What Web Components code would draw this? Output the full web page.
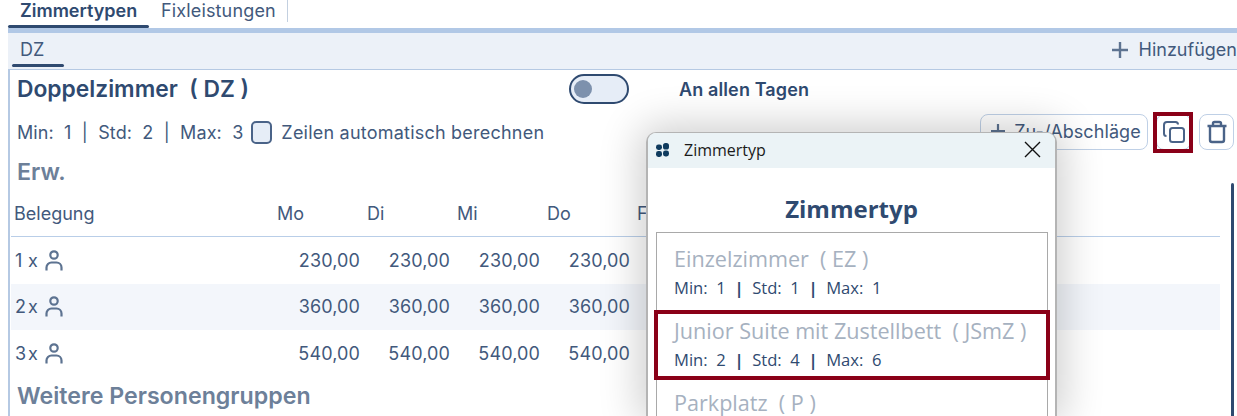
<!DOCTYPE html>
<html lang="de"><head><meta charset="utf-8">
<style>
html,body{margin:0;padding:0;background:#fff}
body{width:1237px;height:416px;overflow:hidden;position:relative;font-family:Inter,"Liberation Sans",sans-serif;color:#2f4a70}
</style></head><body>
<app-tabs></app-tabs>
<sub-bar></sub-bar>
<room-panel></room-panel>
<room-dialog></room-dialog>
<script>
const el=(name,html)=>customElements.define(name,class extends HTMLElement{constructor(){super();this.attachShadow({mode:'open'}).innerHTML=html}});
const person='<svg width="18" height="21" viewBox="0 0 18 21" fill="none" stroke="#5d7391" stroke-width="2.2"><circle cx="9" cy="5" r="3.7"/><path d="M1.5 20.5v-3a5 5 0 0 1 5-5h5a5 5 0 0 1 5 5v3"/></svg>';
el('app-tabs',`<style>
:host{display:flex;height:28px;padding-left:8px;box-sizing:border-box;font-size:18px;align-items:flex-start}
.t{height:28px;box-sizing:border-box;padding:0 12px;line-height:21px;position:relative;white-space:nowrap}
.a{font-weight:600;width:141px}
.a::after{content:"";position:absolute;left:0;right:0;bottom:0;height:3px;border-radius:2px;background:#2f4a70}
.b{color:#42597c;width:139px;height:22px;border-right:1px solid #c3d0e0;letter-spacing:.15px}
</style><div class="t a">Zimmertypen</div><div class="t b">Fixleistungen</div>`);
el('sub-bar',`<style>
:host{display:block;border-top:5px solid #b1c8e6;margin-left:8px;height:36px;background:#ecf1f8;position:relative}
.w{display:flex;justify-content:space-between;height:100%;font-size:18px}
.d{width:52px;margin-left:4px;box-sizing:border-box;padding:6px 8px 0;line-height:22px;height:34px;position:relative;color:#42597c}
.d::after{content:"";position:absolute;left:0;right:0;bottom:0;height:3px;border-radius:2px;background:#2f4a70}
.h{display:flex;align-items:center;gap:10px;height:36px;color:#42597c;padding-bottom:3px;box-sizing:border-box;white-space:nowrap}
</style><div class="w"><div class="d">DZ</div><div class="h"><svg width="18" height="18" viewBox="0 0 18 18" stroke="#5d7391" stroke-width="2.4"><path d="M9 1v16M1 9h16"/></svg><span>Hinzufügen</span></div></div>`);
const row=(n,v,s)=>`<div class="r ${s?'s':''}"><div class="c0"><span class="num">${n}</span><span class="x">x</span>${person}</div>${[v,v,v,v].map(p=>`<div class="c">${p}</div>`).join('')}</div>`;
el('room-panel',`<style>
:host{display:block;margin-left:8px;height:347px;border-top:1px solid #b5c9e3;border-left:2px solid #b5c9e3;box-sizing:border-box;position:relative;overflow:hidden}
.top{display:flex;height:38px;align-items:center;padding-left:7px}
h2{margin:0;font-size:22.8px;font-weight:600;width:552px;white-space:pre;line-height:36px}
.sw{width:60px;height:30px;border:2px solid #2f4a70;border-radius:15px;background:#e6edf7;box-sizing:border-box;display:flex;align-items:center;padding-left:3px;margin-top:-1px}
.sw i{width:18px;height:18px;border-radius:50%;background:#7d91ad}
.all{margin-left:50px;font-weight:600;font-size:18px;letter-spacing:.12px}
.info{display:flex;align-items:center;height:44px;padding-left:7px;font-size:18px;white-space:pre;color:#42597c;margin-top:2px;margin-right:3px;letter-spacing:.09px}
.cb{width:21px;height:23px;border:2px solid #4a6388;border-radius:5px;background:#e6edf7;box-sizing:border-box;margin:0 9px 0 8px}
.ze{letter-spacing:.22px}
.btns{margin-left:auto;display:flex;gap:8px;align-items:center;height:36px}
.btn{height:36px;border:1px solid #bfd0e6;border-radius:8px;box-sizing:border-box;display:flex;align-items:center;justify-content:center;background:#fff;color:#42597c;gap:8px;position:relative}
.z{width:168px;padding:0 0 2px 3px;box-sizing:border-box}
.i{width:35px}
.mark::after{content:"";position:absolute;inset:-3px -3px -4px -4px;border:4px solid #8a0018}
h3{margin:0;font-size:23.2px;font-weight:600;color:#6d8099;padding-left:7px;line-height:30px}
.erw{margin-top:3px}
.tb{margin-left:1px;width:1209px;font-size:18px;color:#42597c}
.hd{display:flex;height:50px;padding-top:4px;align-items:center;border-bottom:1px solid #b9cee8;box-sizing:border-box}
.hd div{width:90px}
.hd .c0{width:266px;padding-left:3px}
.r{display:flex;height:46.5px;align-items:center}
.s{background:#f3f6fb}
.c0{width:259px;display:flex;align-items:center;padding-left:4px;box-sizing:border-box}
.num{width:13px}
.x{margin:0 7px 0 0;width:10px}
.c{width:90px;text-align:right;letter-spacing:.12px}
.bar{position:absolute;right:3px;top:113px;width:3px;height:240px;background:#2f4a70;border-radius:2px}
</style>
<div class="top"><h2>Doppelzimmer  ( DZ )</h2><div class="sw"><i></i></div><div class="all">An allen Tagen</div></div>
<div class="info"><span>Min:  1  |  Std:  2  |  Max:  3</span><span class="cb"></span><span class="ze">Zeilen automatisch berechnen</span>
<div class="btns"><div class="btn z"><svg width="16" height="16" viewBox="0 0 16 16" stroke="#5d7391" stroke-width="2.2"><path d="M8 1v14M1 8h14"/></svg><span>Zu-/Abschläge</span></div>
<div class="btn i mark"><svg width="24" height="24" viewBox="0 0 24 24" fill="none" stroke="#4a6388" stroke-width="2"><rect x="8" y="8" width="14" height="14" rx="2.5"/><path d="M4.5 16A2.5 2.5 0 0 1 2 13.5V5a3 3 0 0 1 3-3h8.5A2.5 2.5 0 0 1 16 4.5"/></svg></div>
<div class="btn i"><svg width="24" height="24" viewBox="0 0 24 24" fill="none" stroke="#4a6388" stroke-width="2.4"><path d="M2.5 6h19M8 6V3.5A1.5 1.5 0 0 1 9.5 2h5A1.5 1.5 0 0 1 16 3.5V6M5 6v14a2 2 0 0 0 2 2h10a2 2 0 0 0 2-2V6"/></svg></div></div></div>
<h3 class="erw">Erw.</h3>
<div class="tb"><div class="hd"><div class="c0">Belegung</div><div>Mo</div><div>Di</div><div>Mi</div><div>Do</div><div>Fr</div></div>
${row(1,'230,00')}${row(2,'360,00',1)}${row(3,'540,00')}</div>
<h3 style="line-height:38px">Weitere Personengruppen</h3>
<div class="bar"></div>`);
el('room-item',`<style>
:host{display:block;padding:8px 17px 0;box-sizing:border-box;font-family:"Open Sans","Noto Sans",sans-serif;position:relative;height:72px}
.n{font-size:21.6px;color:#a6b1c0;white-space:pre;line-height:36px}
.m{font-size:16.6px;color:#2f4a70;white-space:pre;line-height:22px}
:host([mark])::after{content:"";position:absolute;inset:5px -3px -3px -3px;border:4px solid #8a0018}
</style><div class="n"><slot name="n"></slot></div><div class="m"><slot name="m"></slot></div>`);
el('room-dialog',`<style>
:host{position:absolute;left:646px;top:132px;width:411px;height:284px;background:#fff;border:2px solid #b4b4b4;border-top-width:1px;border-bottom:0;border-radius:10px 10px 0 0;box-sizing:border-box;box-shadow:0 0 42px 6px rgba(0,0,0,.2);font-family:"Open Sans","Noto Sans",sans-serif;color:#1a1a1a}
.tb{height:35px;background:#ebf3f6;border-radius:8px 8px 0 0;display:flex;align-items:center;font-size:16px;padding:0 0 2px 8px;box-sizing:border-box}
.tb span{margin-left:14px;flex:1}
.tb svg.x{margin-right:14px}
h1{margin:0;font-size:24px;font-weight:700;text-align:center;color:#2f4a70;padding-top:24px;line-height:34px}
.list{margin:6px 7px 0 8px;border:1px solid #a9a9a9;border-bottom:0;height:184px;box-sizing:border-box}
b{font-weight:700;color:#2f4a70}
</style>
<div class="tb"><svg width="14" height="14" viewBox="0 0 14 14" fill="#0f3b5e"><rect x="0" y="1.5" width="6" height="5.5" rx="2.4"/><rect x="7" y="0" width="6" height="6.5" rx="2.6"/><rect x="0" y="8" width="6" height="6" rx="2.4"/><rect x="7" y="7.5" width="6" height="6" rx="2.4"/></svg><span>Zimmertyp</span><svg class="x" width="17" height="17" viewBox="0 0 17 17" stroke="#111" stroke-width="1.4"><path d="M1 1l15 15M16 1L1 16"/></svg></div>
<h1>Zimmertyp</h1>
<div class="list">
<room-item><span slot="n">Einzelzimmer  ( EZ )</span><span slot="m">Min:  1  <b>|</b>  Std:  1  <b>|</b>  Max:  1</span></room-item>
<room-item mark><span slot="n">Junior Suite mit Zustellbett  ( JSmZ )</span><span slot="m">Min:  2  <b>|</b>  Std:  4  <b>|</b>  Max:  6</span></room-item>
<room-item style="height:40px"><span slot="n">Parkplatz  ( P )</span></room-item>
</div>`);
</script>
</body></html>
